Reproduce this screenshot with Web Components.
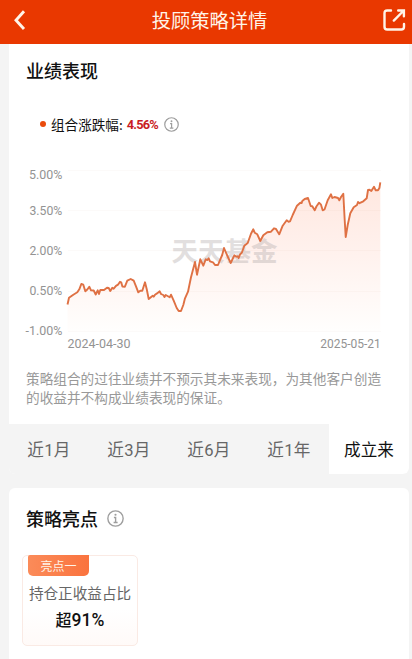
<!DOCTYPE html>
<html lang="zh-CN">
<head>
<meta charset="UTF-8">
<meta name="viewport" content="width=device-width, initial-scale=1.0">
<title>投顾策略详情</title>
<style>
  body {
    margin: 0;
    height: 659px;
    overflow: hidden;
    background: #f4f4f4;
    color: #111;
    font-family: "Noto Sans CJK SC", sans-serif;
  }
  .num {
    font-family: Roboto, "Noto Sans CJK SC", sans-serif;
  }
  highlight-box .num {
    font-size: 17.5px;
  }
</style>
</head>
<body>
<nav-header>投顾策略详情</nav-header>
<strategy-card class="first">
  <span slot="title">业绩表现</span>
  <chart-legend>组合涨跌幅:<span slot="value" class="num">4.56%</span></chart-legend>
  <profit-chart></profit-chart>
  <risk-note>策略组合的过往业绩并不预示其未来表现，为其他客户创造的收益并不构成业绩表现的保证。</risk-note>
  <range-tabs></range-tabs>
</strategy-card>
<strategy-card class="second">
  <span slot="title">策略亮点</span>
  <info-icon slot="title" style="--size: 17px"></info-icon>
  <highlight-box>
    <span slot="tag">亮点一</span>
    <span slot="label">持仓正收益占比</span>
    <span slot="value">超<span class="num">91%</span></span>
  </highlight-box>
</strategy-card>

<script>
class NavHeader extends HTMLElement {
  connectedCallback() {
    this.attachShadow({ mode: 'open' });
    this.shadowRoot.innerHTML = `
      <style>
        :host {
          display: flex;
          align-items: center;
          justify-content: space-between;
          box-sizing: border-box;
          height: 44px;
          padding: 0 5px 0 13px;
          background: #e93800;
          color: #fff4e8;
        }
        h1 {
          margin: 0;
          padding: 0 0 5px 10px;
          font-size: 19.3px;
          line-height: 28px;
          font-weight: 400;
        }
        svg {
          display: block;
          margin-bottom: 5px;
          fill: none;
          stroke: currentColor;
        }
      </style>
      <svg width="14" height="22" viewBox="0 0 14 22" stroke-width="2.9"><path d="M11 2.3 3 11.2l8 8.8"/></svg>
      <h1><slot></slot></h1>
      <svg width="25" height="24" viewBox="0 0 25 24" stroke-width="2.4" stroke-linecap="round">
        <path d="M9 2.5H5.2Q2.5 2.5 2.5 5.2V18.8Q2.5 21.5 5.2 21.5H19.3Q22 21.5 22 18.8V16"/>
        <path d="M11.8 12.6 21.3 3M16.2 2.5H21.9V8.3"/>
      </svg>
    `;
  }
}

class StrategyCard extends HTMLElement {
  connectedCallback() {
    this.attachShadow({ mode: 'open' });
    this.shadowRoot.innerHTML = `
      <style>
        :host {
          display: flex;
          flex-direction: column;
          box-sizing: border-box;
          margin: 0 3px 0 9px;
          background: #fff;
          overflow: hidden;
        }
        :host(.first) {
          height: 430px;
          border-radius: 0 0 6px 6px;
          --top: 13px;
        }
        :host(.second) {
          height: 180px;
          margin-top: 14px;
          border-radius: 6px 6px 0 0;
          --top: 17px;
        }
        header {
          display: flex;
          align-items: center;
          gap: 9px;
          height: 26px;
          padding: var(--top) 17px 0;
          font-size: 18px;
          line-height: 26px;
          font-weight: 500;
        }
      </style>
      <header><slot name="title"></slot></header>
      <slot></slot>
    `;
  }
}

class InfoIcon extends HTMLElement {
  connectedCallback() {
    this.attachShadow({ mode: 'open' });
    this.shadowRoot.innerHTML = `
      <style>
        :host {
          display: block;
          width: var(--size, 15px);
          height: var(--size, 15px);
        }
        svg { display: block; }
      </style>
      <svg width="100%" height="100%" viewBox="0 0 16 16" fill="none" stroke="#9e9e9e" stroke-width="1.3">
        <circle cx="8" cy="8" r="7.2"/>
        <path d="M6.5 7H8.1V11.8M6.2 11.8H10"/>
        <circle cx="8" cy="4.5" r="1" fill="#9e9e9e" stroke="none"/>
      </svg>
    `;
  }
}

class ChartLegend extends HTMLElement {
  connectedCallback() {
    this.attachShadow({ mode: 'open' });
    this.shadowRoot.innerHTML = `
      <style>
        :host {
          display: flex;
          align-items: center;
          height: 20px;
          margin: 31px 0 0 31px;
          font-size: 13.6px;
          line-height: 20px;
        }
        i {
          width: 6px;
          height: 6px;
          margin-right: 5px;
          border-radius: 50%;
          background: #ea4b0c;
        }
        b {
          margin: 0 6px 0 4px;
          color: #c91d24;
          font-size: 12.8px;
          font-weight: 700;
          letter-spacing: -0.8px;
        }
      </style>
      <i></i><slot></slot><b><slot name="value"></slot></b><info-icon></info-icon>
    `;
  }
}

class ProfitChart extends HTMLElement {
  connectedCallback() {
    const points = [
      [67.5,304.5],[69,297.7],[73.3,294.7],[77.3,292.3],[79.3,289.3],[81.3,284],[83.3,284.7],[85.3,291.3],
      [87.3,289.5],[89.3,286.7],[91,290.3],[93.7,290.5],[95.7,294.5],[97.7,290.3],[99,294],[100.3,290],
      [104,290],[107,287.7],[108.7,288],[110.3,291],[112.3,287.7],[113.7,288.7],[116,285.8],[118,284.7],
      [120,281.8],[121.2,282.3],[122.4,286.5],[124.9,286.7],[127.3,280.7],[130.7,279],[133.7,280.7],
      [136,286.3],[138.3,292.3],[140.3,290.7],[142.3,290.7],[145,282.3],[146.7,289],[148.7,299],
      [152.7,295.7],[153.7,296.7],[155,294.7],[157,293.4],[159.7,291.3],[161,294],[163.3,295],[164.5,297],
      [165.7,295],[169.7,297.3],[171,294.7],[173.7,300.7],[176.7,308],[178.7,311],[181,311],[183.3,305],
      [185,298.3],[188,291.7],[191,277.3],[195,262],[197,274.7],[200.3,259.3],[203.3,265.7],[205.7,259.3],
      [207.5,260],[208.7,258.3],[210,261.3],[213,262.3],[215,265],[218,265],[220.3,259.3],[222.2,255],
      [224,248],[227,255],[230.7,263],[234.3,255.3],[236.4,256.7],[237.7,256.3],[238.7,258],[240,254.5],
      [242,252.3],[244.3,245.7],[247.7,243],[251,233.7],[253.3,229.3],[254.7,232.7],[257.3,234.3],
      [260.3,241],[263.3,235.3],[267.3,232.3],[271,231.7],[274,228.3],[276,229],[279.2,234.3],[282.7,225.7],
      [286.7,220.3],[288.6,221.7],[290,221.4],[292.7,215],[297,205.7],[300.3,202.7],[301.7,203],[302.3,201],
      [304.7,199],[308,198],[310.7,206],[312.3,206.3],[314.7,210.3],[316.4,206.5],[319,202.7],[321,204.7],
      [322.7,210.3],[324.5,209.5],[327.7,200.3],[331,194.3],[332.3,198],[334.5,197],[338,198],[339.3,200.3],
      [341,197],[343.3,193.7],[344.7,220],[345.7,237],[347.7,225],[350.3,213.3],[353.7,207.3],[357,205],
      [358,202],[359.5,203.2],[363.3,201.3],[366.7,198.3],[368,190],[369.6,189.8],[371.3,191],[374,186.7],
      [375.7,190.3],[378,190.3],[379.4,188],[380.3,182.3]
    ];
    const line = points.map(p => p.join(',')).join(' ');
    const levels = [['5.00%', 170, 29], ['3.50%', 210, 29.5], ['2.00%', 250, 29.5], ['0.50%', 291, 29.5], ['-1.00%', 331, 25.5]];
    const labelY = [179, 214.5, 254.5, 295.3, 335.3];
    const grid = levels.map(l => `<path d="M68 ${l[1]}.5H381"/>`).join('');
    const labels = levels.map((l, i) =>
      `<text x="${l[2]}" y="${labelY[i]}" textLength="${62.3 - l[2]}" lengthAdjust="spacingAndGlyphs">${l[0]}</text>`).join('');

    this.attachShadow({ mode: 'open' });
    this.shadowRoot.innerHTML = `
      <style>
        :host {
          display: block;
          height: 195px;
          margin-top: 26px;
        }
        svg { display: block; }
        .axis {
          font: 12.3px Roboto, sans-serif;
          fill: #939393;
        }
        .mark {
          font: 700 26.5px "Noto Sans CJK SC", sans-serif;
          fill: #b6aeae;
          opacity: .4;
        }
      </style>
      <svg width="400" height="195" viewBox="9 160 400 195">
        <defs>
          <linearGradient id="area" gradientUnits="userSpaceOnUse" x1="0" y1="182" x2="0" y2="331">
            <stop offset="0" stop-color="#ffe7df"/>
            <stop offset=".5" stop-color="#fff2ee"/>
            <stop offset="1" stop-color="#fffefd"/>
          </linearGradient>
        </defs>
        <polygon points="67.5,331 ${line} 380.3,331" fill="url(#area)"/>
        <g stroke="#b56e50" stroke-opacity=".035">${grid}</g>
        <text class="mark" x="171.5" y="260.5" textLength="106">天天基金</text>
        <polyline points="${line}" fill="none" stroke="#df7144" stroke-width="1.9" stroke-linejoin="round"/>
        <g class="axis">
          ${labels}
          <text x="67.5" y="348.3" textLength="63" lengthAdjust="spacingAndGlyphs">2024-04-30</text>
          <text x="320.3" y="348.3" textLength="60.5" lengthAdjust="spacingAndGlyphs">2025-05-21</text>
        </g>
      </svg>
    `;
  }
}

class RiskNote extends HTMLElement {
  connectedCallback() {
    this.attachShadow({ mode: 'open' });
    this.shadowRoot.innerHTML = `
      <style>
        :host {
          display: block;
          height: 38px;
          margin: 14px 26px 17px 17px;
          color: #999;
          font-size: 13.67px;
          line-height: 19px;
        }
      </style>
      <slot></slot>
    `;
  }
}

class RangeTabs extends HTMLElement {
  connectedCallback() {
    const tabs = ['近1月', '近3月', '近6月', '近1年', '成立来'];
    this.attachShadow({ mode: 'open' });
    this.shadowRoot.innerHTML = `
      <style>
        :host {
          display: grid;
          grid-template-columns: repeat(5, 1fr);
          height: 50px;
          background: #f4f4f4;
          color: #666;
          font-family: Roboto, "Noto Sans CJK SC", sans-serif;
          font-size: 16.6px;
        }
        span {
          display: flex;
          align-items: center;
          justify-content: center;
          letter-spacing: .4px;
        }
        .active {
          background: #fff;
          color: #111;
          border-bottom-right-radius: 6px;
          letter-spacing: 0;
        }
      </style>
      ${tabs.map((t, i) => `<span class="${i === 4 ? 'active' : ''}">${t}</span>`).join('')}
    `;
  }
}

class HighlightBox extends HTMLElement {
  connectedCallback() {
    this.attachShadow({ mode: 'open' });
    this.shadowRoot.innerHTML = `
      <style>
        :host {
          display: flex;
          flex-direction: column;
          align-items: center;
          box-sizing: border-box;
          width: 116px;
          height: 91px;
          margin: 24px 0 0 13px;
          border: 1px solid #faeae4;
          border-radius: 5px;
          background: linear-gradient(180deg, #fff 60%, #fffaf8);
        }
        .tag {
          align-self: flex-start;
          width: 61px;
          height: 21px;
          margin: -1px 0 0 5px;
          border-radius: 2px 0 5px 5px;
          background: linear-gradient(90deg, #fb8b59, #fa733e);
          color: #fff3e8;
          font-size: 12px;
          line-height: 21px;
          text-align: center;
        }
        .label {
          margin-top: 6px;
          color: #666;
          font-size: 14.6px;
          line-height: 22px;
          white-space: nowrap;
        }
        .value {
          margin-top: 3px;
          font-size: 16px;
          font-weight: 500;
          line-height: 24px;
        }
      </style>
      <div class="tag"><slot name="tag"></slot></div>
      <div class="label"><slot name="label"></slot></div>
      <div class="value"><slot name="value"></slot></div>
    `;
  }
}

customElements.define('nav-header', NavHeader);
customElements.define('strategy-card', StrategyCard);
customElements.define('info-icon', InfoIcon);
customElements.define('chart-legend', ChartLegend);
customElements.define('profit-chart', ProfitChart);
customElements.define('risk-note', RiskNote);
customElements.define('range-tabs', RangeTabs);
customElements.define('highlight-box', HighlightBox);
</script>
</body>
</html>
